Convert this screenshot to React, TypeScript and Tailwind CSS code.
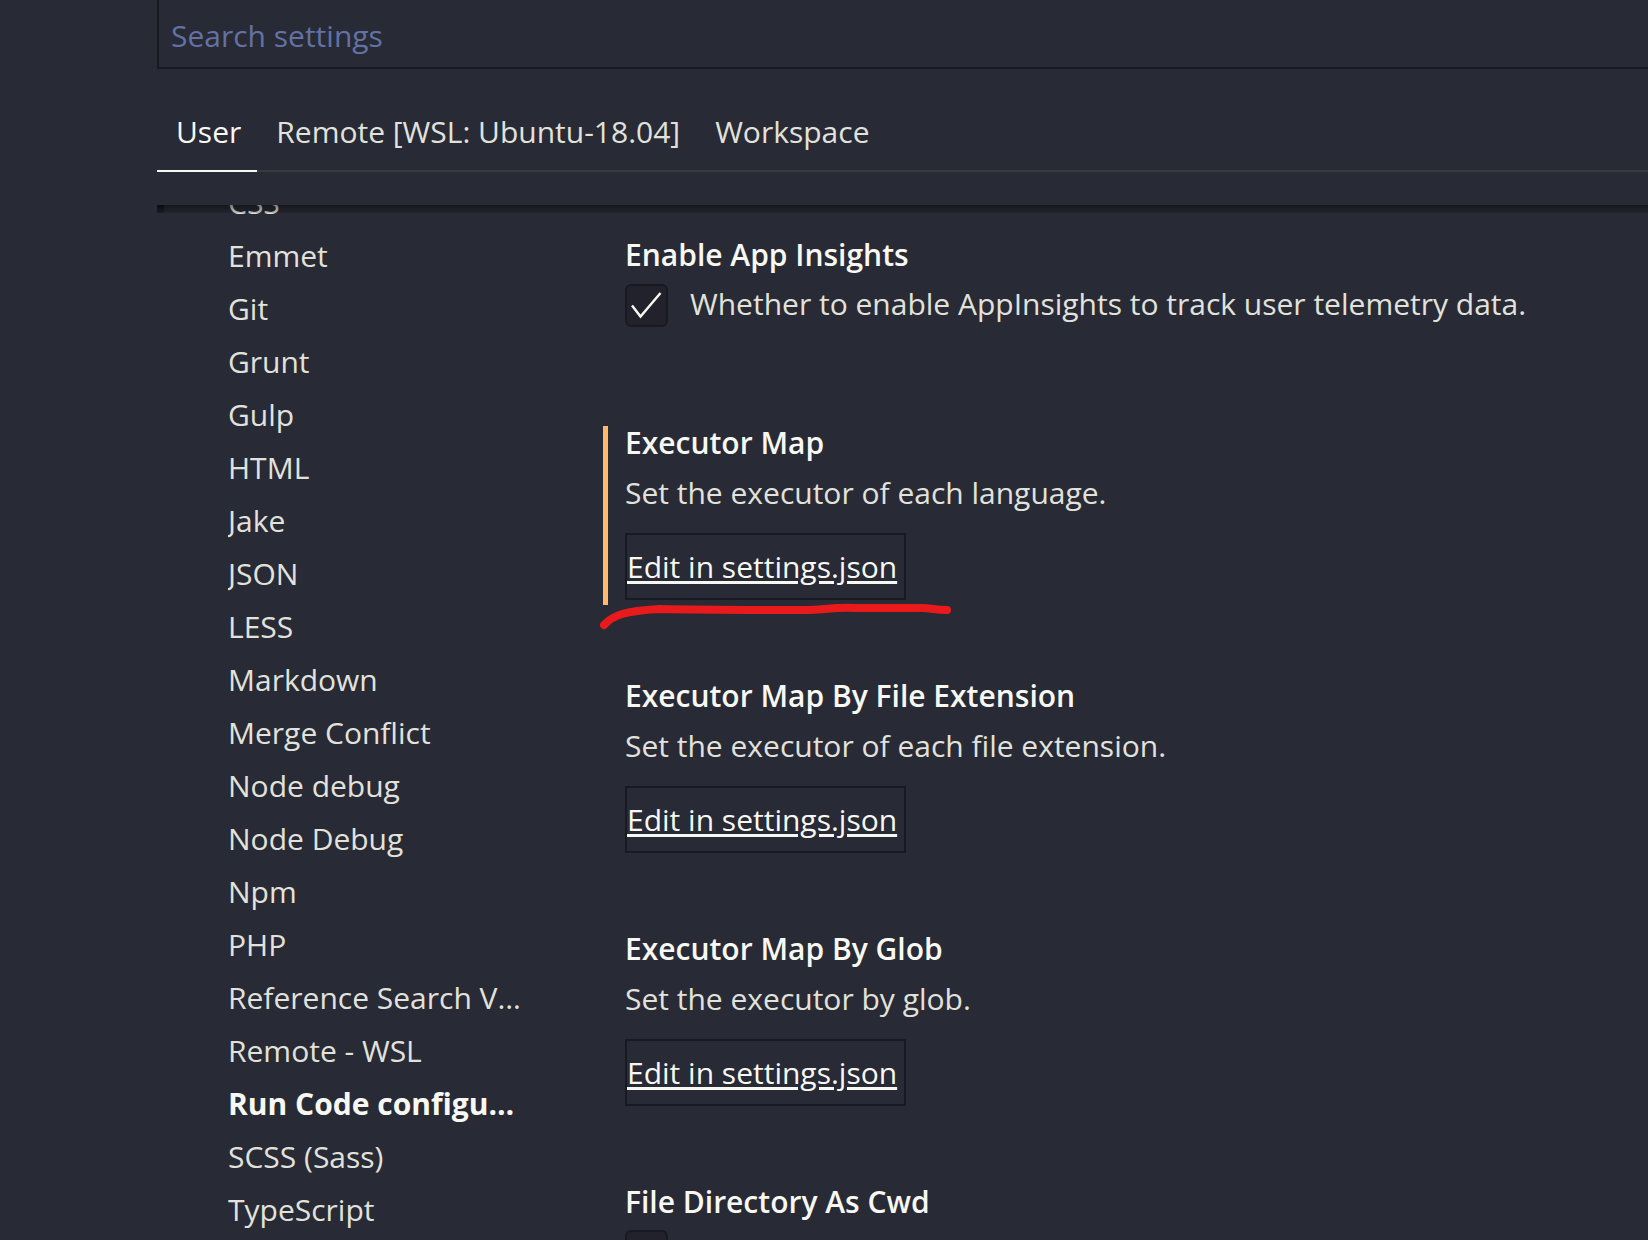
import React, { useState } from "react";

const groups = [
  "CSS", "Emmet", "Git", "Grunt", "Gulp", "HTML", "Jake", "JSON", "LESS", "Markdown",
  "Merge Conflict", "Node debug", "Node Debug", "Npm", "PHP", "Reference Search View",
  "Remote - WSL", "Run Code configuration", "SCSS (Sass)", "TypeScript",
];

const tabs = ["User", "Remote [WSL: Ubuntu-18.04]", "Workspace"];

function Check({ id, label, defaultChecked }: { id: string; label: string; defaultChecked: boolean }) {
  const [checked, setChecked] = useState(defaultChecked);
  return (
    <div className="mt-[7px] flex items-center gap-[22px]">
      <span className="grid size-[43px] shrink-0">
        <input
          id={id}
          type="checkbox"
          checked={checked}
          onChange={(e) => setChecked(e.target.checked)}
          aria-label={label ? undefined : "File Directory As Cwd"}
          className="col-start-1 row-start-1 size-full appearance-none rounded-md border-2 border-[#191a21] bg-[#21222c]"
        />
        {checked && (
          <svg viewBox="0 0 43 43" className="pointer-events-none col-start-1 row-start-1 size-full" fill="none" stroke="#f8f8f2" strokeWidth="2.4">
            <path d="M7 21.5 L15.5 32.5 L35.5 9" />
          </svg>
        )}
      </span>
      {label && <label htmlFor={id} className="pb-0.5 text-[#e2e2dc]">{label}</label>}
    </div>
  );
}

function JsonSetting({ title, description, modified }: { title: string; description: string; modified?: boolean }) {
  return (
    <section className="relative pb-12">
      {modified && <span className="absolute top-1 -left-[22px] h-[179px] w-[5px] bg-[#ffb86c]" />}
      <h2 className="font-semibold text-[#f8f8f2]">{title}</h2>
      <p className="mt-2 text-[#e2e2dc]">{description}</p>
      <button type="button" className="mt-[19px] mb-[27px] flex h-[67px] items-center border-2 border-[#191a21] pr-[7px] text-[#f8f8f2] underline decoration-[3px] underline-offset-3">
        Edit in settings.json
      </button>
      {modified && (
        <svg viewBox="0 0 360 40" className="pointer-events-none absolute top-[176px] -left-[28px] h-10 w-[360px]" fill="none" stroke="#e81a1c" strokeWidth="8" strokeLinecap="round" strokeLinejoin="round">
          <path d="M7 27 C16 17 28 13 62 11 C110 12 160 12 212 12 C235 11 235 9 260 10 H325 C335 10 338 12 350 12" />
        </svg>
      )}
    </section>
  );
}

export default function App() {
  const [tab, setTab] = useState(0);
  return (
    <div className="flex h-screen flex-col overflow-hidden bg-[#282a36] pl-[157px] font-['Open_Sans',sans-serif] text-[30px] leading-[42px] text-[#e2e2dc]">
      <header className="shrink-0">
        <input
          type="text"
          aria-label="Search settings"
          placeholder="Search settings"
          className="block h-[69px] w-full border-b-2 border-l-2 border-[#191a21] bg-[#282a36] pt-1 pl-3 placeholder:text-[#6272a4] placeholder:opacity-100 focus:outline-none"
        />
        <nav className="mt-[33px] flex border-b-2 border-[#3a3a3c]">
          {tabs.map((name, i) => (
            <button
              key={name}
              type="button"
              onClick={() => setTab(i)}
              className={i === tab
                ? "-mb-0.5 border-b-2 border-[#f8f8f2] pt-[9px] pr-4 pb-[17px] pl-[19px] text-[#f8f8f2]"
                : "-mb-0.5 border-b-2 border-transparent pt-[9px] pr-4 pb-[17px] pl-[19px]"}
            >
              {name}
            </button>
          ))}
        </nav>
      </header>
      <main className="relative mt-[33px] flex min-h-0 flex-1 overflow-hidden">
        <div className="pointer-events-none absolute inset-x-0 top-0 z-10 h-2 bg-linear-to-b from-black/45 to-black/15">
          <div className="h-2 w-[7px] bg-linear-to-b from-black/50 to-black/20" />
        </div>
        <ul className="-mt-[29px] ml-[71px] w-[296px] shrink-0">
          {groups.map((g) => (
            <li key={g}>
              <a
                href="#"
                className={g.startsWith("Run Code")
                  ? "block truncate leading-[53px] font-bold text-[#f8f8f2]"
                  : "block truncate leading-[53px]"}
              >
                {g}
              </a>
            </li>
          ))}
        </ul>
        <div className="ml-[101px] min-w-0 flex-1 pt-[29px]">
          <section className="pb-[95px]">
            <h2 className="font-semibold text-[#f8f8f2]">Enable App Insights</h2>
            <Check id="insights" defaultChecked label="Whether to enable AppInsights to track user telemetry data." />
          </section>
          <JsonSetting title="Executor Map" description="Set the executor of each language." modified />
          <JsonSetting title="Executor Map By File Extension" description="Set the executor of each file extension." />
          <JsonSetting title="Executor Map By Glob" description="Set the executor by glob." />
          <section>
            <h2 className="font-semibold text-[#f8f8f2]">File Directory As Cwd</h2>
            <Check id="cwd" defaultChecked={false} label="" />
          </section>
        </div>
      </main>
    </div>
  );
}
